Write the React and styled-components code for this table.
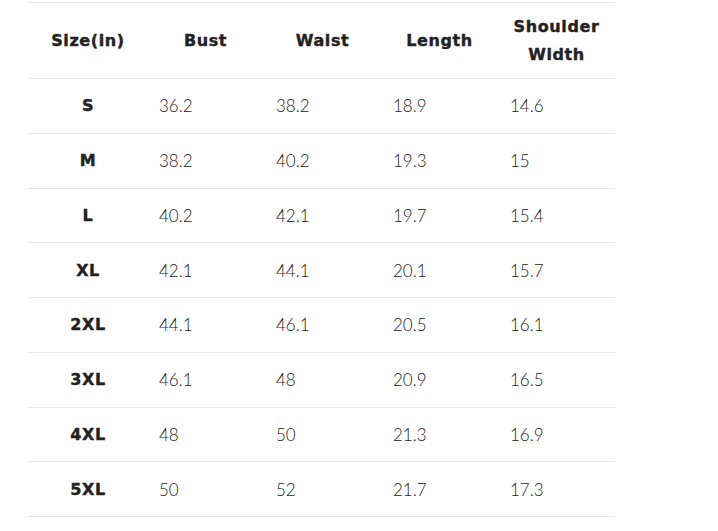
import styled, { createGlobalStyle } from "styled-components";

const GlobalStyle = createGlobalStyle`
  body {
    margin: 0;
    background: #fff;
  }
`;

const rows = [
  ["S", "36.2", "38.2", "18.9", "14.6"],
  ["M", "38.2", "40.2", "19.3", "15"],
  ["L", "40.2", "42.1", "19.7", "15.4"],
  ["XL", "42.1", "44.1", "20.1", "15.7"],
  ["2XL", "44.1", "46.1", "20.5", "16.1"],
  ["3XL", "46.1", "48", "20.9", "16.5"],
  ["4XL", "48", "50", "21.3", "16.9"],
  ["5XL", "50", "52", "21.7", "17.3"],
];

export default function App() {
  return (
    <>
      <GlobalStyle />
      <Page>
        <SizeTable>
          <HeadRow>
            <HeadCell>Size(in)</HeadCell>
            <HeadCell>Bust</HeadCell>
            <HeadCell>Waist</HeadCell>
            <HeadCell>Length</HeadCell>
            <HeadCell>
              Shoulder
              <br />
              Width
            </HeadCell>
          </HeadRow>
          {rows.map((r) => (
            <Row key={r[0]}>
              <SizeCell>{r[0]}</SizeCell>
              {r.slice(1).map((v, i) => (
                <Cell key={i}>{v}</Cell>
              ))}
            </Row>
          ))}
        </SizeTable>
      </Page>
    </>
  );
}

const Page = styled.div`
  padding: 2px 0 0 29px;
`;

const SizeTable = styled.div`
  width: 586px;
  border-top: 1px solid #e6e6e6;
`;

const Row = styled.div`
  display: grid;
  grid-template-columns: 118px repeat(4, 117px);
  align-items: center;
  height: 54.75px;
  box-sizing: border-box;
  border-bottom: 1px solid #e6e6e6;
`;

const HeadRow = styled(Row)`
  height: 76px;
`;

const HeadCell = styled.div`
  text-align: center;
  font-family: "DejaVu Sans", sans-serif;
  font-weight: 700;
  font-size: 16px;
  letter-spacing: 0.6px;
  line-height: 28px;
  color: #222;
  -webkit-text-stroke: 0.4px #222;
`;

const Cell = styled.div`
  padding-left: 12px;
  font-family: "Lato", sans-serif;
  font-weight: 300;
  font-size: 17px;
  color: #222;
`;

const SizeCell = styled(Cell)`
  padding-left: 0;
  text-align: center;
  font-family: "DejaVu Sans", sans-serif;
  font-weight: 700;
  font-size: 16px;
  letter-spacing: 0.6px;
  -webkit-text-stroke: 0.4px #222;
`;
